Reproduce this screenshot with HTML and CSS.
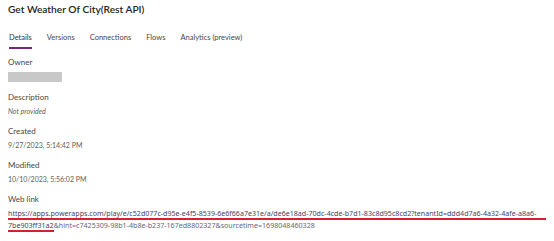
FILE: index.html
```html
<!DOCTYPE html>
<html>
<head>
    <title>Get Weather Of City</title>
    <link rel="stylesheet" href="styles.css">
</head>
<body>
    <div class="page">
        <p class="title">Get Weather Of City(Rest API)</p>
        <!-- tabs -->
        <div class="tabs">
            <span class="tab on">Details</span>
            <span class="tab">Versions</span>
            <span class="tab">Connections</span>
            <span class="tab">Flows</span>
            <span class="tab">Analytics (preview)</span>
        </div>
        <div class="field first">
            <p class="lbl">Owner</p>
            <div class="owner"></div>
        </div>
        <div class="field">
            <p class="lbl">Description</p>
            <p class="val it">Not provided</p>
        </div>
        <div class="field">
            <p class="lbl">Created</p>
            <p class="val">9/27/2023, 5:14:42 PM</p>
        </div>
        <div class="field">
            <p class="lbl">Modified</p>
            <p class="val">10/10/2023, 5:56:02 PM</p>
        </div>
        <div class="field">
            <p class="lbl">Web link</p>
            <a class="link" href="#">
                <span class="l1">https://apps.powerapps.com/play/e/c52d077c-d95e-e4f5-8539-6e6f66a7e31e/a/de6e18ad-70dc-4cde-b7d1-83c8d95c8cd2?tenantId=ddd4d7a6-4a32-4afe-a8a6-</span>
                <span class="l2"><span class="mark">7be903ff31a2</span>&amp;hint=c7425309-98b1-4b8e-b237-167ed8802327&amp;sourcetime=1698048460328</span>
            </a>
        </div>
    </div>
</body>
</html>
```

FILE: styles.css
```css
body {
    margin: 0;
    background-color: #fff;
    font-family: Lato, "Noto Sans", sans-serif;
    color: #323130;
}
.page {
    padding: 3px 8px 0 8px;
}
.title {
    margin: 0;
    font-size: 10.2px;
    font-weight: 600;
    line-height: 12px;
    color: #252423;
}
.tabs {
    display: flex;
    gap: 15px;
    margin-top: 18px;
    padding-left: 1px;
    font-size: 7.5px;
    line-height: 10px;
}
.tab {
    padding-bottom: 4px;
    color: #484644;
}
.tab.on {
    color: #323130;
    border-bottom: 2px solid #742774;
}
.field {
    margin-top: 10px;
}
.field.first {
    margin-top: 8px;
}
.lbl {
    margin: 0;
    font-size: 8px;
    line-height: 11px;
    color: #484644;
}
.val {
    margin: 3px 0 0 0;
    font-size: 7px;
    line-height: 10px;
    color: #605e5c;
}
.it {
    font-style: italic;
}
.owner {
    margin-top: 4px;
    width: 54px;
    height: 10px;
    background-color: #c8c8c8;
}
.link {
    display: block;
    margin-top: 3px;
    font-family: "Noto Sans", sans-serif;
    font-size: 7.1px;
    line-height: 10px;
    color: #4a3d66;
    text-decoration: none;
    white-space: nowrap;
}
.l1 {
    display: block;
    border-bottom: 2px solid #d2222d;
}
.l2 {
    display: block;
    color: #66667a;
}
.mark {
    display: inline-block;
    color: #4a3d66;
    border-bottom: 2px solid #d2222d;
}
```
